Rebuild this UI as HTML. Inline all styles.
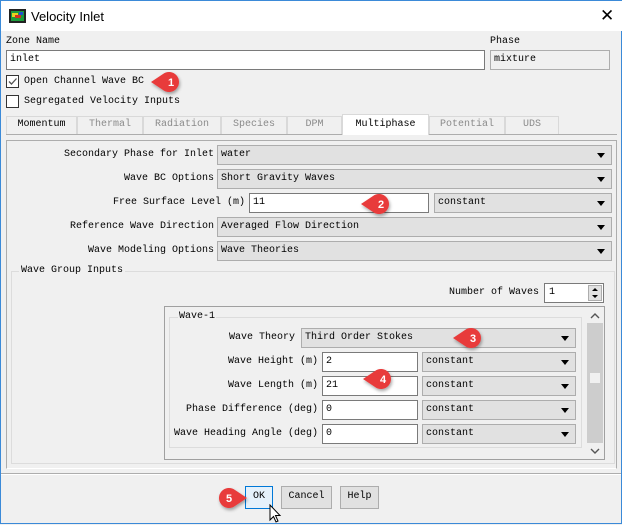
<!DOCTYPE html>
<html><head><style>
*{box-sizing:border-box;margin:0;padding:0}
body{width:622px;height:524px;overflow:hidden;background:#f0f0f0;font-family:"Liberation Mono",monospace;font-size:10px;color:#000;position:relative;border:1px solid #3b8ad8;}
.a{position:absolute}
.t{position:absolute;white-space:nowrap;line-height:12px}
.r{text-align:right}
.in{position:absolute;background:#fff;border:1px solid #7a7a7a;height:20px;padding:3px 0 0 3px;line-height:12px;white-space:nowrap}
.dd{position:absolute;background:#e1e1e1;border:1px solid #adadad;height:20px;padding:3px 0 0 3px;line-height:12px;white-space:nowrap}
.dd:after{content:"";position:absolute;right:6px;top:7px;border-left:4px solid transparent;border-right:4px solid transparent;border-top:5px solid #000}
.tab{position:absolute;top:115px;height:18px;border:1px solid #d9d9d9;border-bottom:none;background:#f0f0f0;color:#8a8a8a;text-align:center;line-height:16px}
.cb{position:absolute;width:13px;height:13px;border:1px solid #333;background:#fff}
.btn{position:absolute;top:485px;height:23px;background:#e1e1e1;border:1px solid #adadad;text-align:center;line-height:20px}
</style></head><body>
<div class="a" style="left:0;top:0;width:621px;height:30px;background:#fff"></div>
<svg class="a" style="left:8px;top:8px" width="17" height="14"><rect width="17" height="14" fill="#222"/><rect x="2" y="2" width="13" height="10" fill="#1c9c3c"/><rect x="3" y="4" width="6" height="4" fill="#e8d020"/><rect x="6" y="6" width="6" height="3" fill="#d03020"/><rect x="10" y="3" width="4" height="3" fill="#2050d0"/></svg>
<div class="t" style="left:30px;top:9px;font-family:'Liberation Sans',sans-serif;font-size:13px;line-height:14px">Velocity Inlet</div>
<div class="t" style="left:599px;top:6px;font-family:'Liberation Sans',sans-serif;font-size:17px;line-height:18px">✕</div>

<div class="t" style="left:5px;top:35px">Zone Name</div>
<div class="t" style="left:489px;top:35px">Phase</div>
<div class="in" style="left:5px;top:49px;width:479px">inlet</div>
<div class="in" style="left:489px;top:49px;width:120px;background:#f0f0f0;border-color:#adadad">mixture</div>

<div class="cb" style="left:5px;top:74px"></div>
<svg class="a" style="left:6px;top:75px" width="11" height="11"><path d="M2 5.5 L4.5 8 L9.5 2.5" stroke="#555" stroke-width="1.3" fill="none"/></svg>
<div class="t" style="left:23px;top:75px">Open Channel Wave BC</div>
<div class="cb" style="left:5px;top:94px"></div>
<div class="t" style="left:23px;top:95px">Segregated Velocity Inputs</div>

<div class="tab" style="left:5px;width:71px;color:#000">Momentum</div>
<div class="tab" style="left:76px;width:66px">Thermal</div>
<div class="tab" style="left:142px;width:78px">Radiation</div>
<div class="tab" style="left:220px;width:66px">Species</div>
<div class="tab" style="left:286px;width:55px">DPM</div>
<div class="tab" style="left:341px;width:87px;top:113px;height:21px;background:#fff;color:#000;z-index:2;line-height:20px">Multiphase</div>
<div class="tab" style="left:428px;width:76px">Potential</div>
<div class="tab" style="left:504px;width:54px">UDS</div>
<div class="a" style="left:5px;top:133px;width:611px;height:1px;background:#adadad"></div>
<div class="a" style="left:5px;top:139px;width:611px;height:329px;border:1px solid #adadad;border-bottom-color:#fff;background:#f0f0f0"></div>

<div class="t r" style="left:10px;width:203px;top:148px">Secondary Phase for Inlet</div>
<div class="dd" style="left:216px;top:144px;width:395px">water</div>
<div class="t r" style="left:10px;width:203px;top:172px">Wave BC Options</div>
<div class="dd" style="left:216px;top:168px;width:395px">Short Gravity Waves</div>
<div class="t r" style="left:10px;width:234px;top:196px">Free Surface Level (m)</div>
<div class="in" style="left:248px;top:192px;width:180px">11</div>
<div class="dd" style="left:433px;top:192px;width:178px">constant</div>
<div class="t r" style="left:10px;width:203px;top:220px">Reference Wave Direction</div>
<div class="dd" style="left:216px;top:216px;width:395px">Averaged Flow Direction</div>
<div class="t r" style="left:10px;width:203px;top:244px">Wave Modeling Options</div>
<div class="dd" style="left:216px;top:240px;width:395px">Wave Theories</div>

<div class="a" style="left:10px;top:270px;width:604px;height:193px;border:1px solid #dcdcdc"></div>
<div class="t" style="left:18px;top:264px;background:#f0f0f0;padding:0 2px">Wave Group Inputs</div>
<div class="t r" style="left:400px;width:138px;top:286px">Number of Waves</div>
<div class="in" style="left:543px;top:282px;width:60px;padding-left:4px">1</div>
<div class="a" style="left:587px;top:284px;width:14px;height:16px;background:#e1e1e1;border:1px solid #adadad"></div>
<svg class="a" style="left:589px;top:285px" width="10" height="14"><path d="M2 5 L5 2 L8 5Z M2 9 L5 12 L8 9Z" fill="#000"/></svg>

<div class="a" style="left:163px;top:305px;width:441px;height:154px;border:1px solid #a0a0a0;background:#f0f0f0"></div>
<div class="a" style="left:586px;top:306px;width:17px;height:152px;background:#f0f0f0"></div>
<div class="a" style="left:586px;top:322px;width:16px;height:120px;background:#cdcdcd"></div>
<div class="a" style="left:589px;top:372px;width:10px;height:10px;background:#f0f0f0"></div>
<svg class="a" style="left:588px;top:311px" width="12" height="8"><path d="M2 6 L6 2 L10 6" stroke="#555" stroke-width="1.4" fill="none"/></svg>
<svg class="a" style="left:588px;top:446px" width="12" height="8"><path d="M2 2 L6 6 L10 2" stroke="#555" stroke-width="1.4" fill="none"/></svg>
<div class="a" style="left:168px;top:316px;width:413px;height:131px;border:1px solid #dcdcdc"></div>
<div class="t" style="left:177px;top:310px;background:#f0f0f0;padding:0 1px">Wave-1</div>

<div class="t r" style="left:168px;width:126px;top:331px">Wave Theory</div>
<div class="dd" style="left:300px;top:327px;width:275px">Third Order Stokes</div>
<div class="t r" style="left:168px;width:149px;top:355px">Wave Height (m)</div>
<div class="in" style="left:321px;top:351px;width:96px">2</div>
<div class="dd" style="left:421px;top:351px;width:154px">constant</div>
<div class="t r" style="left:168px;width:149px;top:379px">Wave Length (m)</div>
<div class="in" style="left:321px;top:375px;width:96px">21</div>
<div class="dd" style="left:421px;top:375px;width:154px">constant</div>
<div class="t r" style="left:168px;width:149px;top:403px">Phase Difference (deg)</div>
<div class="in" style="left:321px;top:399px;width:96px">0</div>
<div class="dd" style="left:421px;top:399px;width:154px">constant</div>
<div class="t r" style="left:160px;width:157px;top:427px">Wave Heading Angle (deg)</div>
<div class="in" style="left:321px;top:423px;width:96px">0</div>
<div class="dd" style="left:421px;top:423px;width:154px">constant</div>

<div class="a" style="left:0;top:472px;width:620px;height:1px;background:#adadad"></div>
<div class="a" style="left:0;top:473px;width:620px;height:1px;background:#fff"></div>
<div class="btn" style="left:244px;width:28px;border:1px solid #0078d7;background:#e5f1fb">OK</div>
<div class="btn" style="left:280px;width:51px">Cancel</div>
<div class="btn" style="left:339px;width:39px">Help</div>
<svg class="a" style="left:268px;top:503px" width="14" height="20"><path d="M1 1 L1 16 L4.5 12.5 L7 18 L9 17 L6.5 11.5 L11 11.5Z" fill="#fff" stroke="#000" stroke-width="1"/></svg>

<svg class="a" style="left:0;top:0;pointer-events:none" width="622" height="524">
<defs><filter id="s" x="-50%" y="-50%" width="200%" height="200%"><feDropShadow dx="1" dy="2" stdDeviation="1.5" flood-opacity="0.35"/></filter></defs>
<g font-family="Liberation Sans,sans-serif" font-size="11" font-weight="bold" fill="#fff" text-anchor="middle">
<g filter="url(#s)"><path d="M150 81 L162 73 A10 10 0 1 1 162 89 Z" fill="#e83a3a"/></g><text x="170" y="85">1</text>
<g filter="url(#s)"><path d="M360 203 L372 195 A10 10 0 1 1 372 211 Z" fill="#e83a3a"/></g><text x="380" y="207">2</text>
<g filter="url(#s)"><path d="M452 337 L464 329 A10 10 0 1 1 464 345 Z" fill="#e83a3a"/></g><text x="472" y="341">3</text>
<g filter="url(#s)"><path d="M362 378 L374 370 A10 10 0 1 1 374 386 Z" fill="#e83a3a"/></g><text x="382" y="382">4</text>
<g filter="url(#s)"><path d="M246 497 L234 489 A10 10 0 1 0 234 505 Z" fill="#e83a3a"/></g><text x="228" y="501">5</text>
</g></svg>
</body></html>
